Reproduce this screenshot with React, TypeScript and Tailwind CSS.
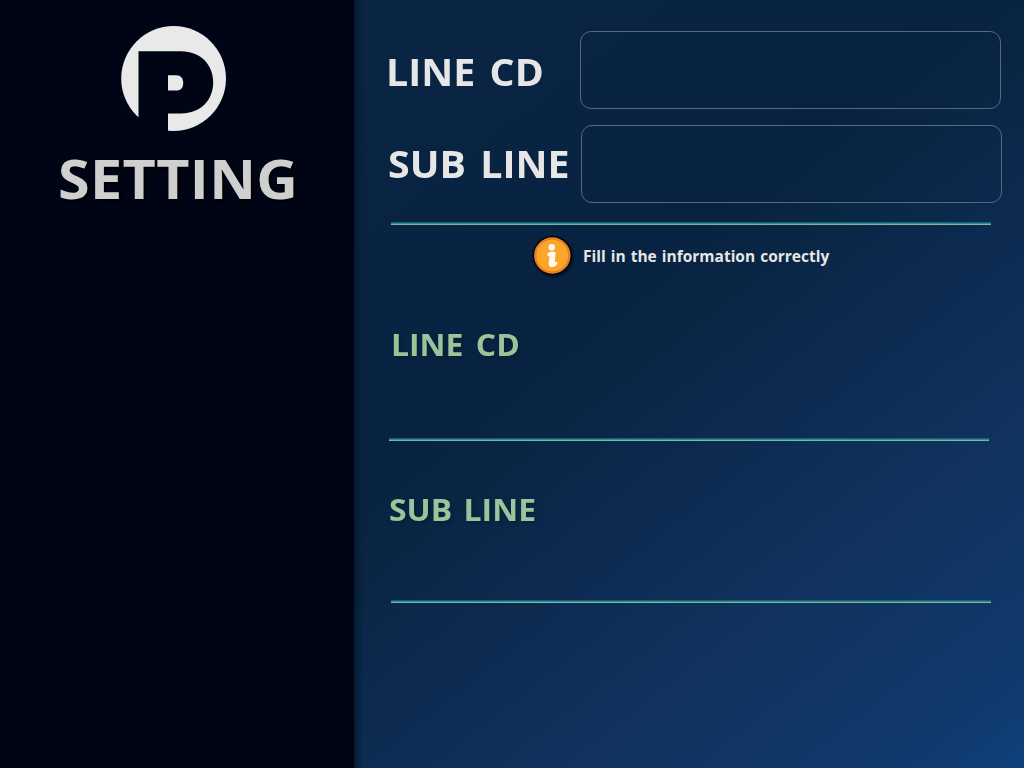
import React from "react";

function Logo() {
  return (
    <svg width="108" height="108" viewBox="120 25 108 108" className="block">
      <circle cx="173.6" cy="78.5" r="52.4" fill="#e9e9e9" />
      <path
        fill="#000516"
        d="M138.5 51.2H181C201 51.2 213.2 65 213.2 82.3C213.2 100 201 113.5 181 113.5H168V133H138.5Z"
      />
      <path fill="#e9e9e9" d="M168 75.2H176C181 75.2 183.2 78.5 183.2 83C183.2 87.5 181 90.6 176 90.6H168Z" />
    </svg>
  );
}

function InfoIcon() {
  return (
    <svg width="48" height="48" viewBox="529 232 48 48" className="block shrink-0">
      <defs>
        <filter id="soft" x="-30%" y="-30%" width="160%" height="160%">
          <feGaussianBlur stdDeviation="1.5" />
        </filter>
      </defs>
      <circle cx="554" cy="257.5" r="19.5" fill="#000" opacity="0.5" filter="url(#soft)" />
      <circle cx="552.3" cy="255.5" r="19.8" fill="#02060c" />
      <circle cx="552.3" cy="255.5" r="18.2" fill="#ea7f2a" />
      <circle cx="552.3" cy="255.5" r="15.8" fill="#fba628" />
      <circle cx="551.8" cy="247.2" r="3.2" fill="#fff8ee" />
      <path
        d="M547.3 255C547.5 252.8 550.2 251.6 553 251.6C555.4 251.6 555.7 253 555.5 254.6L554.9 261.4C554.8 262.8 556.4 261.8 557.3 261.8C558 264.6 554.8 267.2 552.1 267.2C549.4 267.2 548.5 265.4 548.8 262.8L549.4 257.2C549.5 255.8 548 256.8 547.3 255Z"
        fill="#fff8ee"
      />
    </svg>
  );
}

function Rule({ className = "" }: { className?: string }) {
  return (
    <div className={`w-[600px] ${className}`}>
      <div className="h-px bg-[#146173]" />
      <div className="h-px bg-[#2b8b8c]" />
      <div className="h-px bg-[#7fb5a9]" />
    </div>
  );
}

export default function App() {
  return (
    <div className="flex h-[768px] w-[1024px] overflow-hidden bg-[#000516] font-['Open_Sans','Noto_Sans',sans-serif] whitespace-nowrap">
      <aside className="flex w-[354px] shrink-0 flex-col pt-[25px]">
        <div className="pl-[120px]">
          <Logo />
        </div>
        <h1 className="mt-[16px] ml-[58px] origin-left scale-x-[1.085] text-[53px] leading-[60px] font-bold tracking-[0.3px] text-[#cfcfcf] [text-shadow:2px_2px_2px_#000]">
          SETTING
        </h1>
      </aside>

      <main className="flex w-[670px] flex-col bg-[linear-gradient(90deg,#061a31_0px,#061a3100_9px),linear-gradient(142deg,#092543_0%,#082341_38%,#0a2645_46%,#0c294e_54%,#11335e_74%,#10386a_89%,#0f3b71_95%,#0f417e_100%)]">
        <div className="mt-[31px] flex h-[78px] items-start">
          <label htmlFor="line" className="w-[226px] pl-[32px] pt-[10px] text-[38px] leading-[60px] font-bold text-[#e6e6e6]">
            <span className="inline-block origin-left scale-x-[1.035] [word-spacing:4px]">LINE CD</span>
          </label>
          <input id="line" className="h-[78px] w-[421px] rounded-[11px] border border-[#586779] bg-transparent px-4 text-3xl text-white outline-none" />
        </div>
        <div className="mt-[16px] flex h-[78px] items-start">
          <label htmlFor="sub" className="w-[227px] pl-[34px] pt-[8px] text-[38px] leading-[60px] font-bold text-[#e6e6e6]">
            <span className="inline-block origin-left scale-x-[1.035] [word-spacing:4px]">SUB LINE</span>
          </label>
          <input id="sub" className="h-[78px] w-[421px] rounded-[11px] border border-[#586779] bg-transparent px-4 text-3xl text-white outline-none" />
        </div>
        <Rule className="mt-[19px] ml-[37px]" />
        <div className="mt-[7px] flex h-[48px] pl-[175px]">
          <InfoIcon />
          <p className="pl-[6px] text-[15.5px] leading-[48px] font-bold text-[#e6e6e6] [word-spacing:1px]">Fill in the information correctly</p>
        </div>
        <h2 className="mt-[44px] ml-[37px] origin-left scale-x-[1.03] text-[31px] leading-[40px] font-bold text-[#9cc49b] [text-shadow:2px_2px_3px_#061a3099] [word-spacing:4px]">
          LINE CD
        </h2>
        <Rule className="mt-[74px] ml-[35px]" />
        <h2 className="mt-[48px] ml-[35px] origin-left scale-x-[1.03] text-[31px] leading-[40px] font-bold text-[#9cc49b] [text-shadow:2px_2px_3px_#061a3099] [word-spacing:3px]">
          SUB LINE
        </h2>
        <Rule className="mt-[71px] ml-[37px]" />
      </main>
    </div>
  );
}
